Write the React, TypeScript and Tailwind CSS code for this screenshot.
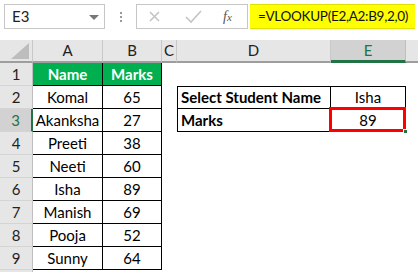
import React from "react";

const font = { fontFamily: "Lato, 'Open Sans', sans-serif" };

const names = [
  ["Komal", "65"],
  ["Akanksha", "27"],
  ["Preeti", "38"],
  ["Neeti", "60"],
  ["Isha", "89"],
  ["Manish", "69"],
  ["Pooja", "52"],
  ["Sunny", "64"],
];

const RowHead: React.FC<{ n?: number; active?: boolean }> = ({ n, active }) => (
  <div
    className={
      "flex items-center justify-center border-b border-[#d4d4d4] text-[15px] " +
      (active
        ? "bg-[#d2d2d2] text-[#217346] border-r-2 border-r-[#217346]"
        : "bg-[#e6e6e6] text-[#222] border-r border-r-[#bfbfbf]")
    }
  >
    {n}
  </div>
);

const ColHead: React.FC<{ label: string; active?: boolean }> = ({ label, active }) => (
  <div
    className={
      "flex items-center justify-center border-r text-[15px] " +
      (active
        ? "bg-[#d2d2d2] text-[#217346] border-r-[#bfbfbf] border-b-[3px] border-b-[#217346]"
        : "bg-[#e6e6e6] text-[#222] border-r-[#c8c8c8] border-b-2 border-b-[#9e9e9e]")
    }
  >
    {label}
  </div>
);

export default function App() {
  return (
    <div className="w-[418px] h-[272px] bg-white overflow-hidden text-black" style={font}>
      {/* formula bar */}
      <div className="h-[40px] flex items-start pt-[4px] bg-white">
        <div className="shrink-0 ml-[4px] w-[101px] h-[25px] border border-[#c6c6c6] flex items-center justify-between pl-[7px] pr-[5px] text-[15px] text-[#222]">
          <span>E3</span>
          <span className="w-0 h-0 border-l-[5px] border-r-[5px] border-t-[5px] border-l-transparent border-r-transparent border-t-[#777] mt-[2px]" />
        </div>
        <div className="shrink-0 w-[31px] h-[25px] flex flex-col items-center justify-center gap-[2px]">
          <span className="w-[2px] h-[2px] bg-[#999]" />
          <span className="w-[2px] h-[2px] bg-[#999]" />
          <span className="w-[2px] h-[2px] bg-[#999]" />
        </div>
        <div className="shrink-0 w-[112px] h-[25px] border border-[#c6c6c6] flex items-center">
          <svg width="36" height="25" viewBox="0 0 36 25" className="shrink-0">
            <path d="M13 8 L22 17 M22 8 L13 17" stroke="#c4c4c4" strokeWidth="1.6" />
          </svg>
          <svg width="40" height="25" viewBox="0 0 40 25" className="shrink-0">
            <path d="M13 13 L18 18 L28 7" stroke="#c4c4c4" strokeWidth="1.6" fill="none" />
          </svg>
          <span className="ml-[10px] text-[14px] italic text-[#555]" style={{ fontFamily: "'Liberation Serif', serif" }}>
            f<span className="text-[11px]">x</span>
          </span>
        </div>
        <div className="shrink-0 w-[2px] h-[25px]" />
        <div className="flex-1 min-w-0 mr-[3px] overflow-hidden whitespace-nowrap h-[25px] bg-[#ffff00] border-y border-[#e0e000] flex items-center pl-[8px] text-[13.5px] tracking-[-0.3px] text-[#111]">
          =VLOOKUP(E2,A2:B9,2,0)
        </div>
      </div>

      {/* sheet */}
      <div className="grid grid-cols-[33px_70px_59px_15px_154px_75px_1fr] grid-rows-[23px] auto-rows-[23px]">
        <div className="bg-[#e6e6e6] border-r border-[#c8c8c8] border-b-2 border-b-[#9e9e9e] flex items-end justify-end pr-[3px] pb-[2px]">
          <svg width="18" height="16" viewBox="0 0 18 16">
            <polygon points="18,0 18,16 0,16" fill="#bdbdbd" />
          </svg>
        </div>
        <ColHead label="A" />
        <ColHead label="B" />
        <ColHead label="C" />
        <ColHead label="D" />
        <ColHead label="E" active />
        <div className="bg-[#e6e6e6] border-b-2 border-b-[#9e9e9e]" />

        {/* row 1 */}
        <RowHead n={1} />
        <div className="bg-[#00b050] text-white font-bold text-[15px] flex items-center justify-center border-r border-b border-black">
          Name
        </div>
        <div className="bg-[#00b050] text-white font-bold text-[15px] flex items-center justify-center border-r border-b border-black">
          Marks
        </div>
        <div />
        <div />
        <div />
        <div />

        {names.map(([name, mark], i) => {
          const row = i + 2;
          return (
            <React.Fragment key={name}>
              <RowHead n={row} active={row === 3} />
              <div className="text-[15px] flex items-center justify-center border-r border-b border-black">
                {name}
              </div>
              <div className="text-[15px] flex items-center justify-center border-r border-b border-black">
                {mark}
              </div>
              <div />
              {row === 2 && (
                <>
                  <div className="text-[15px] font-bold flex items-center pl-[3px] border border-black whitespace-nowrap">
                    Select Student Name
                  </div>
                  <div className="text-[15px] flex items-center justify-center border-t border-r border-b border-black">
                    Isha
                  </div>
                </>
              )}
              {row === 3 && (
                <>
                  <div className="text-[15px] font-bold flex items-center pl-[3px] border-l border-r border-b border-black">
                    Marks
                  </div>
                  <div className="relative text-[15px] flex items-center justify-center border-r border-b border-black">
                    89
                    <div className="absolute -left-[2px] -top-[2px] -right-[1px] -bottom-[1px] border-[3px] border-[#ff0000]" />
                    <div className="absolute -right-[3px] -bottom-[3px] w-[5px] h-[5px] bg-[#217346] border border-white" />
                  </div>
                </>
              )}
              {row !== 2 && row !== 3 && (
                <>
                  <div />
                  <div />
                </>
              )}
              <div />
            </React.Fragment>
          );
        })}
        <RowHead />
      </div>
    </div>
  );
}
